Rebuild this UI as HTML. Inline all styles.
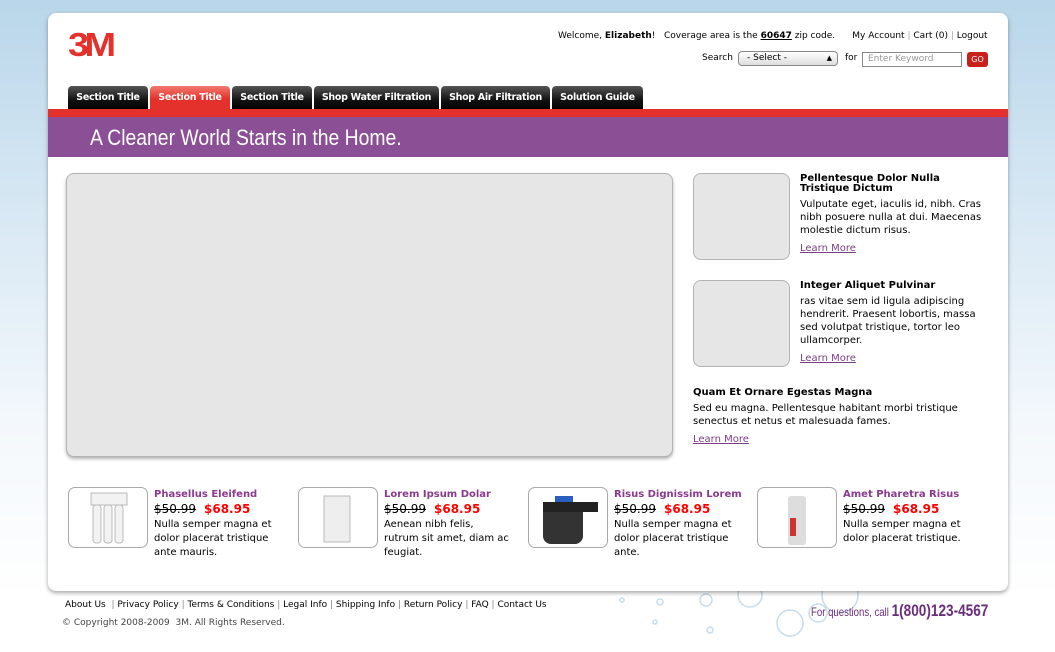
<!DOCTYPE html>
<html><head><meta charset="utf-8"><style>
*{margin:0;padding:0;box-sizing:border-box}
body{width:1055px;height:652px;overflow:hidden;position:relative;font-family:"DejaVu Sans","Liberation Sans",sans-serif;font-size:10px;color:#000;background:linear-gradient(#b9d6ea 0,#d6e7f3 200px,#f3f8fc 420px,#fff 600px)}
.a{position:absolute}
.card{left:48px;top:13px;width:960px;height:578px;background:#fff;border-radius:8px;box-shadow:0 2px 4px rgba(0,0,0,.35)}
.logo{left:68px;top:30px;font-family:"Liberation Sans",sans-serif;font-weight:bold;font-size:33px;color:#e4312b;letter-spacing:-4px;line-height:30px;transform:scaleX(1.15);transform-origin:left}
.tab{top:86px;height:24px;background:linear-gradient(#555,#111 60%,#000);color:#fff;font-weight:bold;font-size:9.5px;line-height:23px;text-align:center;border-radius:4px 4px 0 0;letter-spacing:-.3px;white-space:nowrap}
.tab.on{background:linear-gradient(#f07a6f,#e4312b 55%)}
.red{left:48px;top:109px;width:960px;height:8px;background:#e4312b}
.pur{left:48px;top:117px;width:960px;height:40px;background:#8b4f96}
.pt1{left:90px;top:117px;color:#fff;font-family:"Liberation Sans",sans-serif;font-size:22px;line-height:42px;transform:scaleX(.88);transform-origin:left;white-space:nowrap}
.ph{background:#e6e6e6;border:1px solid #b3b3b3;border-radius:8px}
h4{font-size:10px;font-weight:bold;line-height:10px}
p{line-height:13px}
.lm{color:#7a3f86;text-decoration:underline}
.pn{color:#8b3a8f;font-weight:bold;font-size:10px}
.old{text-decoration:line-through;font-size:12px}
.new{color:#f00;font-weight:bold;font-size:12px;margin-left:8px}
.pt{border:1px solid #aaa;border-radius:7px;width:80px;height:61px;top:487px;background:#fff}
.pr{top:488px;width:140px;line-height:14px}
.sm{font-size:9px;white-space:nowrap}
</style></head><body>
<svg class="a" style="left:590px;top:575px" width="420" height="77">
<g fill="none" stroke="#c8dce9" stroke-width="1.5">
<circle cx="200" cy="48" r="13"/><circle cx="228" cy="38" r="9"/><circle cx="116" cy="25" r="6"/><circle cx="70" cy="27" r="3"/><circle cx="160" cy="20" r="12"/><circle cx="250" cy="20" r="18"/><circle cx="120" cy="55" r="3"/><circle cx="65" cy="47" r="2"/><circle cx="32" cy="25" r="2"/></g></svg>
<div class="a card"></div>
<div class="a logo">3M</div>
<div class="a sm" style="left:558px;top:31px">Welcome, <b>Elizabeth</b>! &nbsp;&nbsp;Coverage area is the <b><u>60647</u></b> zip code.&nbsp;&nbsp;&nbsp;&nbsp;&nbsp;&nbsp;My Account <span style="color:#aaa">|</span> Cart (0) <span style="color:#aaa">|</span> Logout</div>
<div class="a sm" style="left:702px;top:53px">Search</div>
<div class="a" style="left:738px;top:51px;width:100px;height:15px;border:1px solid #888;border-radius:4px;background:linear-gradient(#fff,#ddd);font-size:9px;line-height:13px;padding-left:8px">- Select -<span style="position:absolute;right:5px;font-size:7px">&#9650;</span></div>
<div class="a sm" style="left:845px;top:53px">for</div>
<div class="a" style="left:862px;top:52px;width:100px;height:15px;border:1px solid #888;font-size:9px;color:#999;line-height:13px;padding-left:5px">Enter Keyword</div>
<div class="a" style="left:967px;top:52px;width:21px;height:15px;background:#c8201a;border-radius:3px;color:#fff;font-size:8px;line-height:15px;text-align:center">GO</div>
<div class="a tab" style="left:68px;width:80px">Section Title</div>
<div class="a tab on" style="left:150px;width:80px">Section Title</div>
<div class="a tab" style="left:232px;width:80px">Section Title</div>
<div class="a tab" style="left:314px;width:125px">Shop Water Filtration</div>
<div class="a tab" style="left:441px;width:109px">Shop Air Filtration</div>
<div class="a tab" style="left:552px;width:91px">Solution Guide</div>
<div class="a red"></div>
<div class="a pur"></div>
<div class="a pt1">A Cleaner World Starts in the Home.</div>
<div class="a ph" style="left:66px;top:173px;width:607px;height:284px;box-shadow:0 2px 3px rgba(0,0,0,.3)"></div>
<div class="a ph" style="left:693px;top:173px;width:97px;height:87px"></div>
<div class="a ph" style="left:693px;top:280px;width:97px;height:87px"></div>
<div class="a" style="left:800px;top:174px;width:192px"><h4>Pellentesque Dolor Nulla<br>Tristique Dictum</h4><p style="margin-top:4px">Vulputate eget, iaculis id, nibh. Cras nibh posuere nulla at dui. Maecenas molestie dictum risus.</p><p class="lm" style="margin-top:5px">Learn More</p></div>
<div class="a" style="left:800px;top:281px;width:192px"><h4>Integer Aliquet Pulvinar</h4><p style="margin-top:4px">ras vitae sem id ligula adipiscing hendrerit. Praesent lobortis, massa sed volutpat tristique, tortor leo ullamcorper.</p><p class="lm" style="margin-top:5px">Learn More</p></div>
<div class="a" style="left:693px;top:388px;width:300px"><h4>Quam Et Ornare Egestas Magna</h4><p style="margin-top:4px">Sed eu magna. Pellentesque habitant morbi tristique senectus et netus et malesuada fames.</p><p class="lm" style="margin-top:5px">Learn More</p></div>

<div class="a pt" style="left:68px"><svg width="78" height="59"><g fill="#f2f2f2" stroke="#bbb"><rect x="22" y="5" width="36" height="12"/><rect x="24" y="17" width="8" height="38" rx="3"/><rect x="35" y="17" width="8" height="38" rx="3"/><rect x="46" y="17" width="8" height="38" rx="3"/></g></svg></div>
<div class="a pt" style="left:298px"><svg width="78" height="59"><path d="M25 8h26v46H25z" fill="#eee" stroke="#bbb"/></svg></div>
<div class="a pt" style="left:528px"><svg width="78" height="59"><rect x="14" y="16" width="40" height="40" rx="8" fill="#333"/><rect x="14" y="14" width="55" height="10" fill="#222"/><rect x="26" y="8" width="18" height="6" fill="#2a5fc0"/></svg></div>
<div class="a pt" style="left:757px"><svg width="78" height="59"><rect x="30" y="8" width="18" height="49" rx="3" fill="#ddd"/><rect x="32" y="30" width="6" height="18" fill="#c33"/></svg></div>
<div class="a pr" style="left:154px"><div class="pn">Phasellus Eleifend</div><div><span class="old">$50.99</span><span class="new">$68.95</span></div><p style="line-height:14px">Nulla semper magna et dolor placerat tristique ante mauris.</p></div>
<div class="a pr" style="left:384px;width:132px"><div class="pn">Lorem Ipsum Dolar</div><div><span class="old">$50.99</span><span class="new">$68.95</span></div><p style="line-height:14px">Aenean nibh felis,<br>rutrum sit amet, diam ac feugiat.</p></div>
<div class="a pr" style="left:614px"><div class="pn">Risus Dignissim Lorem</div><div><span class="old">$50.99</span><span class="new">$68.95</span></div><p style="line-height:14px">Nulla semper magna et dolor placerat tristique ante.</p></div>
<div class="a pr" style="left:843px"><div class="pn">Amet Pharetra Risus</div><div><span class="old">$50.99</span><span class="new">$68.95</span></div><p style="line-height:14px">Nulla semper magna et dolor placerat tristique.</p></div>

<div class="a sm" style="left:65px;top:600px">About Us <span style="color:#888">&nbsp;|&nbsp;</span>Privacy Policy<span style="color:#888">&nbsp;|&nbsp;</span>Terms &amp; Conditions<span style="color:#888">&nbsp;|&nbsp;</span>Legal Info<span style="color:#888">&nbsp;|&nbsp;</span>Shipping Info<span style="color:#888">&nbsp;|&nbsp;</span>Return Policy<span style="color:#888">&nbsp;|&nbsp;</span>FAQ<span style="color:#888">&nbsp;|&nbsp;</span>Contact Us</div>
<div class="a sm" style="left:62px;top:618px;color:#444">© Copyright 2008-2009 &nbsp;3M. All Rights Reserved.</div>
<div class="a" style="left:811px;top:601px;color:#6a2e7a;font-family:'Liberation Sans',sans-serif;white-space:nowrap;transform:scaleX(.8);transform-origin:left"><span style="font-size:12px">For questions, call </span><b style="font-size:17px">1(800)123-4567</b></div>
</body></html>
